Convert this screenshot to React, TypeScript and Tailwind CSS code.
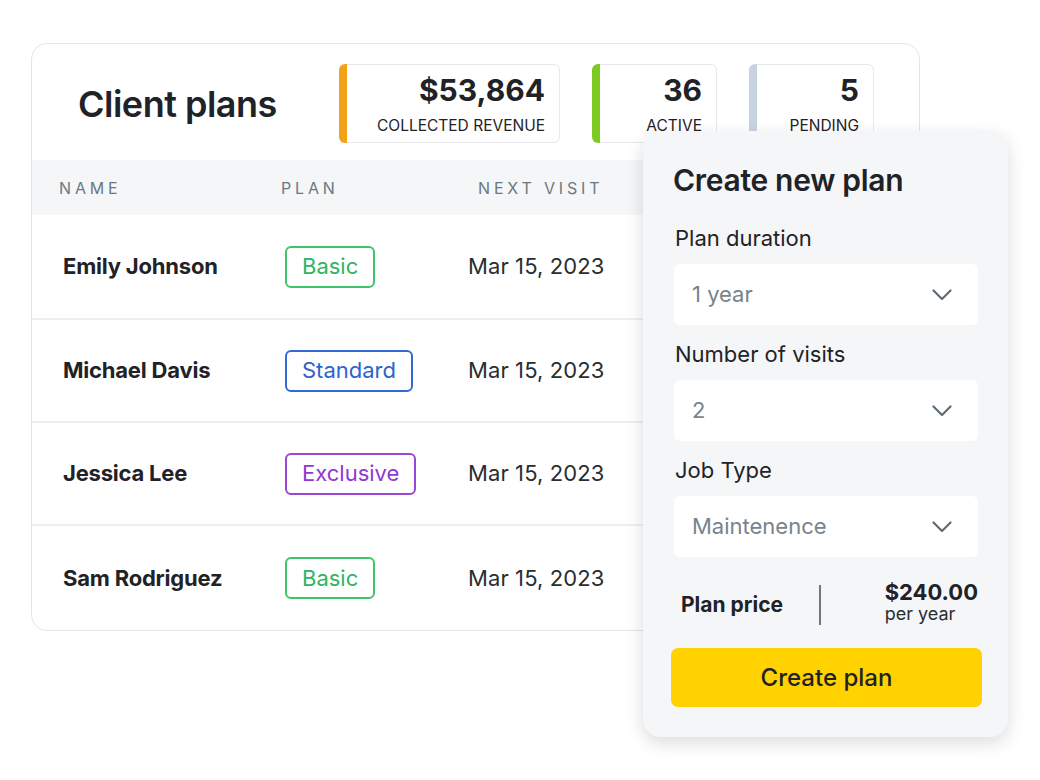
import React from 'react';

type Plan = 'Basic' | 'Standard' | 'Exclusive';

const clients: { name: string; plan: Plan; next: string }[] = [
  { name: 'Emily Johnson', plan: 'Basic', next: 'Mar 15, 2023' },
  { name: 'Michael Davis', plan: 'Standard', next: 'Mar 15, 2023' },
  { name: 'Jessica Lee', plan: 'Exclusive', next: 'Mar 15, 2023' },
  { name: 'Sam Rodriguez', plan: 'Basic', next: 'Mar 15, 2023' },
];

const badgeStyles: Record<Plan, string> = {
  Basic: 'border-[#3ec46d] text-[#2fb562]',
  Standard: 'border-[#3369d6] text-[#2d63cf]',
  Exclusive: 'border-[#9d45d8] text-[#9238d2]',
};

const StatCard = ({ value, label, bar, width }: { value: string; label: string; bar: string; width: string }) => (
  <div className={`flex h-[79px] ${width}`}>
    <div className={`w-[8px] rounded-l-[6px] ${bar}`} />
    <div className="flex flex-1 flex-col items-end justify-center gap-[8px] rounded-r-[6px] border border-l-0 border-[#e6e8eb] pr-[14px]">
      <div className="text-[30px] font-bold leading-[36px] text-[#1f2226]">{value}</div>
      <div className="text-[15.5px] leading-[20px] text-[#1f2226]">{label}</div>
    </div>
  </div>
);

const Chevron = () => (
  <svg width="20" height="12" viewBox="0 0 20 12" fill="none" stroke="#5e6d75" strokeWidth="2.2" strokeLinecap="round" strokeLinejoin="round">
    <polyline points="1.5,1.5 10,10 18.5,1.5" />
  </svg>
);

const SelectBox = ({ value }: { value: string }) => (
  <div className="flex h-[61px] items-center justify-between rounded-[6px] bg-white pl-[18px] pr-[26px]">
    <span className="text-[22px] text-[#77848c]">{value}</span>
    <Chevron />
  </div>
);

export default function App() {
  return (
    <div className="relative h-[780px] w-full bg-white font-['Inter',sans-serif] text-[#1f2226]">
      <div className="ml-[31px] pt-[43px]">
        <div className="w-[889px] overflow-hidden rounded-[16px] border border-[#e3e5e8] bg-white">
          {/* Header with totals */}
          <div className="flex h-[116px] items-center pl-[46px] pt-[3px]">
            <h1 className="w-[261px] text-[36px] font-semibold tracking-[-0.5px]">Client plans</h1>
            <div className="flex gap-[32px]">
              <StatCard value="$53,864" label="COLLECTED REVENUE" bar="bg-[#f4a11a]" width="w-[221px]" />
              <StatCard value="36" label="ACTIVE" bar="bg-[#7dcb22]" width="w-[125px]" />
              <StatCard value="5" label="PENDING" bar="bg-[#c9d3e0]" width="w-[125px]" />
            </div>
          </div>

          {/* Table */}
          <div className="flex h-[55px] items-center bg-[#f4f6f8] pl-[27px] text-[16px] tracking-[0.24em] text-[#6b7980]">
            <span className="w-[222px]">NAME</span>
            <span className="w-[197px]">PLAN</span>
            <span>NEXT VISIT</span>
          </div>
          {clients.map((c, i) => (
            <div
              key={c.name}
              className={`flex items-center pl-[31px] ${i > 0 ? 'border-t-2 border-[#eceef0]' : ''} ${i === clients.length - 1 ? 'h-[106px]' : 'h-[103px]'}`}
            >
              <span className="w-[222px] text-[22px] font-bold tracking-[-0.2px]">{c.name}</span>
              <span className="w-[183px]">
                <span className={`inline-flex h-[42px] items-center rounded-[6px] border-2 px-[15px] text-[22px] ${badgeStyles[c.plan]}`}>
                  {c.plan}
                </span>
              </span>
              <span className="text-[22px] tracking-[0.1px] text-[#2a2d31]">{c.next}</span>
            </div>
          ))}
        </div>
      </div>

      {/* Create plan panel */}
      <div className="absolute left-[643px] top-[131px] w-[365px] rounded-[18px] bg-[#f5f6f8] px-[30px] pb-[30px] pt-[32px] shadow-[0_6px_18px_rgba(0,0,0,0.14)]">
        <h2 className="text-[30px] font-semibold leading-[34px] tracking-[-0.3px]">Create new plan</h2>

        <div className="mt-[27px] pl-[2px] text-[22px] leading-[28px]">Plan duration</div>
        <div className="mt-[12px] pl-[1px]">
          <SelectBox value="1 year" />
        </div>

        <div className="mt-[15px] pl-[2px] text-[22px] leading-[28px]">Number of visits</div>
        <div className="mt-[12px] pl-[1px]">
          <SelectBox value="2" />
        </div>

        <div className="mt-[15px] pl-[2px] text-[22px] leading-[28px]">Job Type</div>
        <div className="mt-[12px] pl-[1px]">
          <SelectBox value="Maintenence" />
        </div>

        <div className="mt-[26px] flex h-[44px] items-center pl-[8px]">
          <span className="w-[138px] text-[21px] font-bold">Plan price</span>
          <div className="h-[40px] w-[2px] bg-[#6b7980]" />
          <div className="flex flex-1 justify-end">
            <div className="mb-[6px] flex flex-col">
              <span className="text-[22px] font-bold leading-[24px]">$240.00</span>
              <span className="text-[18px] leading-[20px] text-[#2a2d31]">per year</span>
            </div>
          </div>
        </div>

        <button className="mx-[-2px] mt-[21px] flex h-[59px] w-[311px] items-center justify-center rounded-[7px] bg-[#ffd200] text-[24px] font-medium text-[#1f2226]">
          Create plan
        </button>
      </div>
    </div>
  );
}
